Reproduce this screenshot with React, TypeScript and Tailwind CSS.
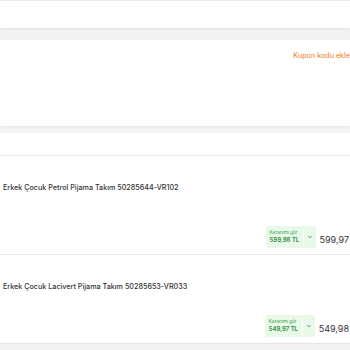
import React from 'react';

const ChevronDown = () => (
  <svg width="6" height="6" viewBox="0 0 10 10" fill="none" stroke="#3a8a4a" strokeWidth="1.4" strokeLinecap="round" strokeLinejoin="round">
    <path d="M2.5 3.8 5 6.3 7.5 3.8" />
  </svg>
);

interface Item {
  title: string;
  earn: string;
  price: string;
}

const items: Item[] = [
  { title: 'Erkek Çocuk Petrol Pijama Takım 50285644-VR102', earn: '599,98 TL', price: '599,97' },
  { title: 'Erkek Çocuk Lacivert Pijama Takım 50285653-VR033', earn: '549,97 TL', price: '549,98' },
];

const ProductRow: React.FC<{ item: Item; height: string; last?: boolean }> = ({ item, height, last }) => (
  <div className={`bg-white flex flex-col ${height} ${last ? '' : 'border-b border-[#ececec]'}`}>
    <div className="pl-[3px] pt-[27px] text-[7.2px] leading-[10px] font-medium text-[#333]">{item.title}</div>
    <div className="flex-1" />
    <div className="flex items-center justify-end gap-[4px] pb-[6px]">
      <div className="flex items-center bg-[#e9f9e9] rounded-[2px] h-[22px] w-[50px] pl-[4px]">
        <div className="flex flex-col justify-center flex-1">
          <span className="text-[4.5px] leading-[6px] text-[#2f9a4a]">Kazanımı gör</span>
          <span className="text-[6px] leading-[8px] font-semibold text-[#2a8a40]">{item.earn}</span>
        </div>
        <div className="w-px h-[16px] bg-white/80" />
        <div className="px-[3px] flex items-center">
          <ChevronDown />
        </div>
      </div>
      <span className="text-[9px] leading-[12px] text-[#333] pt-[6px] pr-[1px]">{item.price}</span>
    </div>
  </div>
);

export default function App() {
  return (
    <div className="w-[350px] h-[350px] overflow-hidden bg-[#f3f3f3] flex flex-col" style={{ fontFamily: 'Inter, "Noto Sans", sans-serif' }}>
      <div className="h-px bg-[#ededed]" />
      <div className="h-[27px] bg-white shadow-[0_1px_2px_rgba(0,0,0,0.08)]" />
      <div className="h-[12px]" />
      <div className="h-[86px] bg-white flex justify-end shadow-[0_1px_2px_rgba(0,0,0,0.06)]">
        <span className="pt-[11px] text-[7.2px] leading-[10px] text-[#f27a1a]">Kupon kodu ekle</span>
      </div>
      <div className="h-[7px]" />
      <div className="h-[23px] bg-white border-b border-[#ececec]" />
      <ProductRow item={items[0]} height="h-[99px]" />
      <ProductRow item={items[1]} height="h-[88px]" last />
      <div className="flex-1 border-t border-[#e6e6e6]" />
    </div>
  );
}
